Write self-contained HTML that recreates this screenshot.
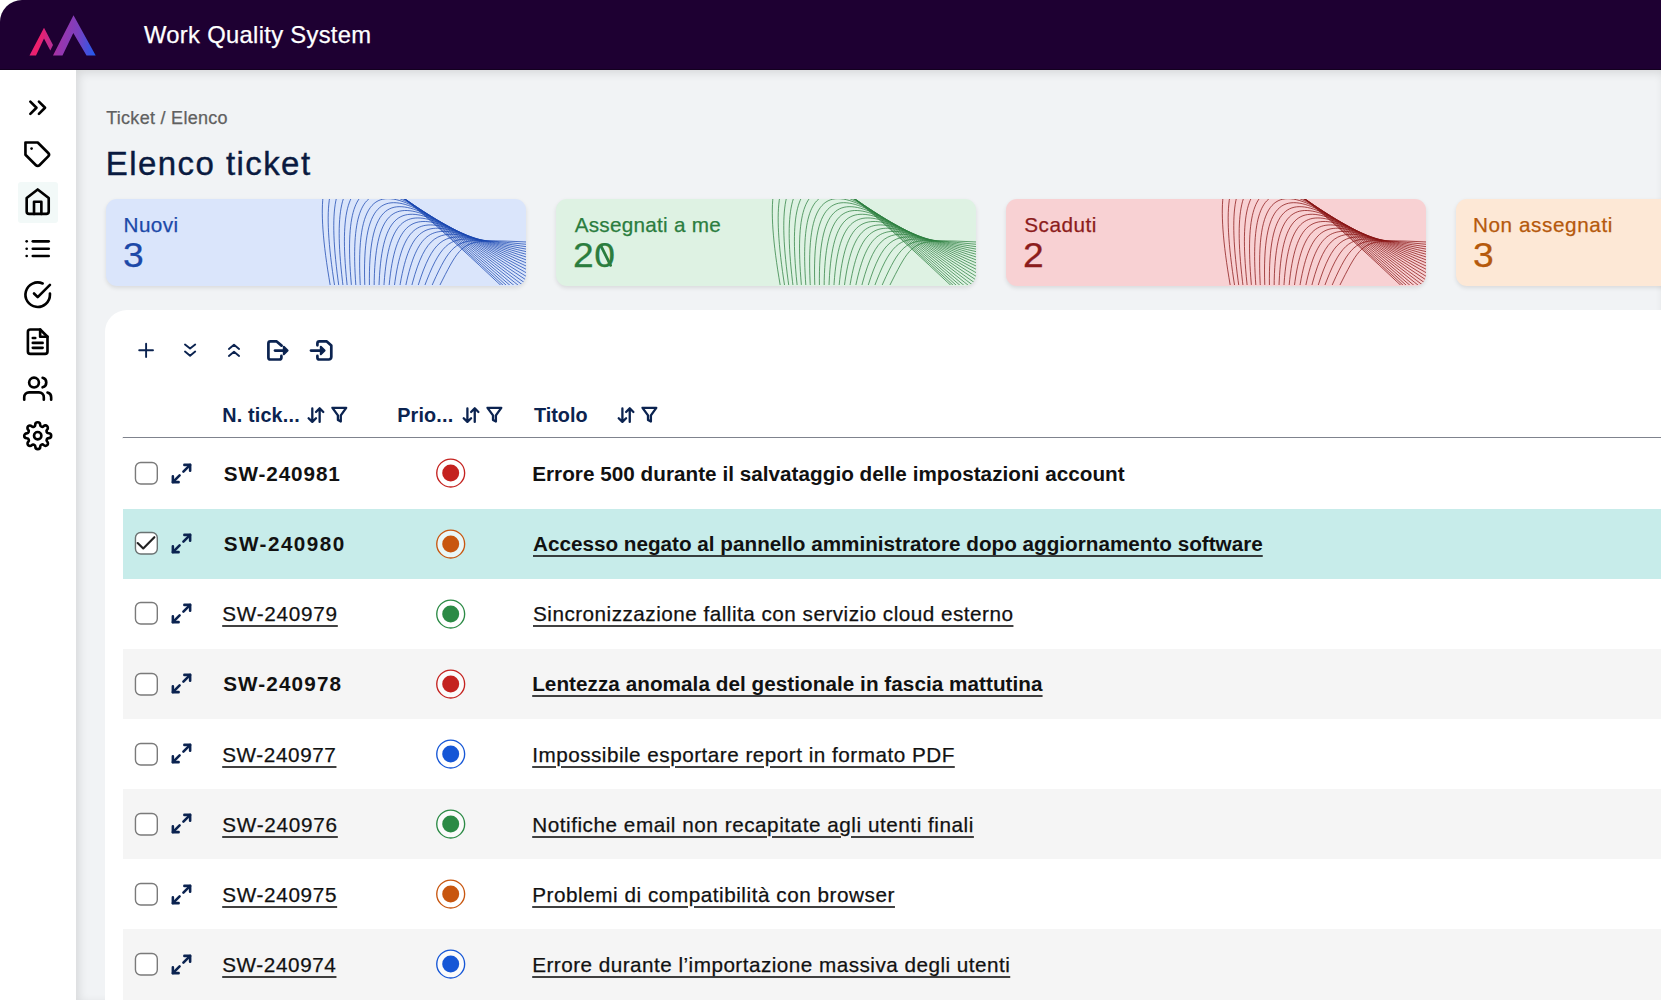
<!DOCTYPE html><html lang="it"><head><meta charset="utf-8"><title>Work Quality System</title><style>
*{box-sizing:border-box;margin:0;padding:0}
html,body{width:1661px;height:1000px;overflow:hidden;background:#fff;font-family:"Liberation Sans",sans-serif;}
.abs{position:absolute}
.ic{position:absolute;overflow:visible}
#hdr{position:absolute;left:0;top:0;width:1661px;height:70px;background:#1e0032;border-top-left-radius:22px;border-bottom:1px solid #13001f;z-index:5}
#side{position:absolute;left:0;top:70px;width:76px;height:930px;background:#fff;z-index:3}
#main{position:absolute;left:76px;top:70px;width:1585px;height:930px;background:#f1f3f5;overflow:hidden;box-shadow:inset 3px 3px 10px rgba(0,0,0,.11)}
.t{position:absolute;white-space:nowrap;line-height:1}
.card{position:absolute;top:199.4px;width:420.3px;height:86.7px;border-radius:11px;overflow:hidden;box-shadow:0 2px 4px rgba(0,0,0,.10)}
.card svg{position:absolute;left:0;top:0;width:420px;height:86px}
#panel{position:absolute;left:105px;top:310px;width:1600px;height:720px;background:#fff;border-top-left-radius:22px}
.row{position:absolute;left:122.75px;width:1560px;height:70.6px}
.u{text-decoration:underline;text-decoration-thickness:2px;text-underline-offset:4.2px;text-decoration-color:rgba(17,17,17,.8)}
.b{font-weight:bold;-webkit-text-stroke:0}
.t{-webkit-text-stroke:.25px}
#ttl{-webkit-text-stroke:.4px}
.b{-webkit-text-stroke:0}
</style></head><body>
<div id="hdr">
<svg class="abs" style="left:0;top:0" width="140" height="70" viewBox="0 0 140 70"><defs><linearGradient id="lg" x1="30" y1="40" x2="96" y2="50" gradientUnits="userSpaceOnUse"><stop offset="0" stop-color="#e0257e"/><stop offset=".12" stop-color="#f01f6a"/><stop offset=".45" stop-color="#9a35ad"/><stop offset=".7" stop-color="#7a40c0"/><stop offset="1" stop-color="#1f5cf0"/></linearGradient></defs><path fill="url(#lg)" d="M29.5 55.6 44 27.8 53 45 50.3 50.5 44 38.5 36 55.6ZM53 55.6 73.5 15.2 95.7 55.6H86.5L73.3 33 62.5 55.6Z"/></svg>
<div class="t " id="appname" style="left:144.00px;top:23.00px;font-size:23.8px;color:#fff;letter-spacing:0.301px;">Work Quality System</div>
</div>
<div id="side"><div class="abs" style="left:17.7px;top:111.6px;width:40.6px;height:41.3px;background:#f2f9f8;border-radius:3px"></div></div>
<div class="abs" style="left:0;top:0;z-index:4">
<svg class="ic" style="left:23.30px;top:93.30px;width:29.40px;height:29.40px;color:#000;" viewBox="0 0 24 24" fill="none" stroke="currentColor" stroke-width="2.15" stroke-linecap="round" stroke-linejoin="round"><polyline points="13 17 18 12 13 7"/><polyline points="6 17 11 12 6 7"/></svg>
<svg class="ic" style="left:23.30px;top:140.05px;width:29.40px;height:29.40px;color:#000;" viewBox="0 0 24 24" fill="none" stroke="currentColor" stroke-width="2.15" stroke-linecap="round" stroke-linejoin="round"><path d="M20.59 13.41l-7.17 7.17a2 2 0 0 1-2.83 0L2 12V2h10l8.59 8.59a2 2 0 0 1 0 2.82z"/><line x1="7" y1="7" x2="7.01" y2="7"/></svg>
<svg class="ic" style="left:23.30px;top:186.80px;width:29.40px;height:29.40px;color:#000;" viewBox="0 0 24 24" fill="none" stroke="currentColor" stroke-width="2.15" stroke-linecap="round" stroke-linejoin="round"><path d="M3 9l9-7 9 7v11a2 2 0 0 1-2 2H5a2 2 0 0 1-2-2z"/><polyline points="9 22 9 12 15 12 15 22"/></svg>
<svg class="ic" style="left:23.30px;top:233.55px;width:29.40px;height:29.40px;color:#000;" viewBox="0 0 24 24" fill="none" stroke="currentColor" stroke-width="2.15" stroke-linecap="round" stroke-linejoin="round"><line x1="8" y1="6" x2="21" y2="6"/><line x1="8" y1="12" x2="21" y2="12"/><line x1="8" y1="18" x2="21" y2="18"/><line x1="3" y1="6" x2="3.01" y2="6"/><line x1="3" y1="12" x2="3.01" y2="12"/><line x1="3" y1="18" x2="3.01" y2="18"/></svg>
<svg class="ic" style="left:23.30px;top:280.30px;width:29.40px;height:29.40px;color:#000;" viewBox="0 0 24 24" fill="none" stroke="currentColor" stroke-width="2.15" stroke-linecap="round" stroke-linejoin="round"><path d="M22 11.08V12a10 10 0 1 1-5.93-9.14"/><polyline points="22 4 12 14.01 9 11.01"/></svg>
<svg class="ic" style="left:23.30px;top:327.05px;width:29.40px;height:29.40px;color:#000;" viewBox="0 0 24 24" fill="none" stroke="currentColor" stroke-width="2.15" stroke-linecap="round" stroke-linejoin="round"><path d="M14 2H6a2 2 0 0 0-2 2v16a2 2 0 0 0 2 2h12a2 2 0 0 0 2-2V8z"/><polyline points="14 2 14 8 20 8"/><line x1="16" y1="13" x2="8" y2="13"/><line x1="16" y1="17" x2="8" y2="17"/><polyline points="10 9 9 9 8 9"/></svg>
<svg class="ic" style="left:23.30px;top:373.80px;width:29.40px;height:29.40px;color:#000;" viewBox="0 0 24 24" fill="none" stroke="currentColor" stroke-width="2.15" stroke-linecap="round" stroke-linejoin="round"><path d="M17 21v-2a4 4 0 0 0-4-4H5a4 4 0 0 0-4 4v2"/><circle cx="9" cy="7" r="4"/><path d="M23 21v-2a4 4 0 0 0-3-3.87"/><path d="M16 3.13a4 4 0 0 1 0 7.75"/></svg>
<svg class="ic" style="left:23.30px;top:420.55px;width:29.40px;height:29.40px;color:#000;" viewBox="0 0 24 24" fill="none" stroke="currentColor" stroke-width="2.15" stroke-linecap="round" stroke-linejoin="round"><circle cx="12" cy="12" r="3"/><path d="M19.4 15a1.65 1.65 0 0 0 .33 1.82l.06.06a2 2 0 0 1 0 2.83 2 2 0 0 1-2.83 0l-.06-.06a1.65 1.65 0 0 0-1.82-.33 1.65 1.65 0 0 0-1 1.51V21a2 2 0 0 1-2 2 2 2 0 0 1-2-2v-.09A1.65 1.65 0 0 0 9 19.4a1.65 1.65 0 0 0-1.82.33l-.06.06a2 2 0 0 1-2.83 0 2 2 0 0 1 0-2.83l.06-.06a1.65 1.65 0 0 0 .33-1.82 1.65 1.65 0 0 0-1.51-1H3a2 2 0 0 1-2-2 2 2 0 0 1 2-2h.09A1.65 1.65 0 0 0 4.6 9a1.65 1.65 0 0 0-.33-1.82l-.06-.06a2 2 0 0 1 0-2.83 2 2 0 0 1 2.83 0l.06.06a1.65 1.65 0 0 0 1.82.33H9a1.65 1.65 0 0 0 1-1.51V3a2 2 0 0 1 2-2 2 2 0 0 1 2 2v.09a1.65 1.65 0 0 0 1 1.51 1.65 1.65 0 0 0 1.82-.33l.06-.06a2 2 0 0 1 2.83 0 2 2 0 0 1 0 2.83l-.06.06a1.65 1.65 0 0 0-.33 1.82V9a1.65 1.65 0 0 0 1.51 1H21a2 2 0 0 1 2 2 2 2 0 0 1-2 2h-.09a1.65 1.65 0 0 0-1.51 1z"/></svg>
</div>
<div id="main"></div>
<div class="abs" style="left:0;top:0;width:1661px;height:1000px;overflow:hidden;z-index:2">
<div class="t " id="bc" style="left:106.20px;top:108.50px;font-size:18px;color:#606060;letter-spacing:0.286px;">Ticket / Elenco</div>
<div class="t " id="ttl" style="left:105.80px;top:147.30px;font-size:33px;color:#0a1a40;letter-spacing:1.432px;">Elenco ticket</div>
<div class="card" style="left:106px;background:#dae5fb"><svg viewBox="0 0 420 86"><path d="M233.0 131.8C176.1 -139.1 268.6 -29.9 450.0 137.9M236.6 131.5C185.0 -131.6 275.5 -22.9 449.4 134.0M240.1 131.3C193.4 -124.5 282.8 -15.6 449.0 129.5M243.6 131.0C201.6 -117.7 289.8 -8.4 448.9 124.7M247.1 130.9C209.6 -111.0 296.5 -1.5 448.9 119.8M250.7 130.7C217.4 -104.4 302.9 5.0 449.1 114.8M254.4 130.6C225.3 -97.7 308.8 11.2 449.4 109.8M258.1 130.5C233.2 -91.1 314.3 16.9 449.8 104.9M261.8 130.3C241.2 -84.4 319.3 22.2 450.4 99.9M265.6 130.2C249.3 -77.5 323.7 27.0 451.1 95.0M269.4 130.1C257.6 -70.5 327.7 31.2 452.0 90.2M273.3 130.0C266.1 -63.3 331.0 35.0 453.0 85.5M277.1 129.8C274.8 -55.8 333.8 38.2 454.1 80.9M281.0 129.6C283.9 -48.2 336.0 40.9 455.4 76.4M284.9 129.4C293.3 -40.2 337.7 43.0 456.8 72.0M288.8 129.1C303.0 -31.9 338.7 44.5 458.3 67.7M292.8 128.8C313.1 -23.3 339.1 45.5 459.9 63.5M296.7 128.4C323.6 -14.4 338.9 45.9 461.7 59.5M300.6 128.0C334.5 -5.1 338.0 45.7 463.6 55.6M304.4 127.5C345.9 4.6 336.5 44.8 465.6 51.9M308.3 127.0C357.8 14.8 334.4 43.4 467.8 48.3M312.2 126.4C370.2 25.4 331.6 41.4 470.1 44.9" fill="none" stroke="#1a47b0" stroke-width=".75"/></svg></div>
<div class="t " id="cl0" style="left:123.50px;top:215.00px;font-size:20.7px;color:#1c49a8;letter-spacing:0.450px;">Nuovi</div>
<div class="t " id="cn0" style="left:123.10px;top:238.20px;font-size:34.8px;color:#1c49a8;letter-spacing:0.000px;transform:scaleX(1.07);transform-origin:0 0">3</div>
<div class="card" style="left:556px;background:#def2e3"><svg viewBox="0 0 420 86"><path d="M233.0 131.8C176.1 -139.1 268.6 -29.9 450.0 137.9M236.6 131.5C185.0 -131.6 275.5 -22.9 449.4 134.0M240.1 131.3C193.4 -124.5 282.8 -15.6 449.0 129.5M243.6 131.0C201.6 -117.7 289.8 -8.4 448.9 124.7M247.1 130.9C209.6 -111.0 296.5 -1.5 448.9 119.8M250.7 130.7C217.4 -104.4 302.9 5.0 449.1 114.8M254.4 130.6C225.3 -97.7 308.8 11.2 449.4 109.8M258.1 130.5C233.2 -91.1 314.3 16.9 449.8 104.9M261.8 130.3C241.2 -84.4 319.3 22.2 450.4 99.9M265.6 130.2C249.3 -77.5 323.7 27.0 451.1 95.0M269.4 130.1C257.6 -70.5 327.7 31.2 452.0 90.2M273.3 130.0C266.1 -63.3 331.0 35.0 453.0 85.5M277.1 129.8C274.8 -55.8 333.8 38.2 454.1 80.9M281.0 129.6C283.9 -48.2 336.0 40.9 455.4 76.4M284.9 129.4C293.3 -40.2 337.7 43.0 456.8 72.0M288.8 129.1C303.0 -31.9 338.7 44.5 458.3 67.7M292.8 128.8C313.1 -23.3 339.1 45.5 459.9 63.5M296.7 128.4C323.6 -14.4 338.9 45.9 461.7 59.5M300.6 128.0C334.5 -5.1 338.0 45.7 463.6 55.6M304.4 127.5C345.9 4.6 336.5 44.8 465.6 51.9M308.3 127.0C357.8 14.8 334.4 43.4 467.8 48.3M312.2 126.4C370.2 25.4 331.6 41.4 470.1 44.9" fill="none" stroke="#2e8040" stroke-width=".75"/></svg></div>
<div class="t " id="cl1" style="left:574.70px;top:215.00px;font-size:20.7px;color:#2b7d3e;letter-spacing:0.261px;">Assegnati a me</div>
<div class="t " id="cn1" style="left:573.30px;top:238.20px;font-size:34.8px;color:#2b7d3e;letter-spacing:0.600px;transform:scaleX(1.07);transform-origin:0 0">20</div>
<div class="card" style="left:1006px;background:#f8d1d3"><svg viewBox="0 0 420 86"><path d="M233.0 131.8C176.1 -139.1 268.6 -29.9 450.0 137.9M236.6 131.5C185.0 -131.6 275.5 -22.9 449.4 134.0M240.1 131.3C193.4 -124.5 282.8 -15.6 449.0 129.5M243.6 131.0C201.6 -117.7 289.8 -8.4 448.9 124.7M247.1 130.9C209.6 -111.0 296.5 -1.5 448.9 119.8M250.7 130.7C217.4 -104.4 302.9 5.0 449.1 114.8M254.4 130.6C225.3 -97.7 308.8 11.2 449.4 109.8M258.1 130.5C233.2 -91.1 314.3 16.9 449.8 104.9M261.8 130.3C241.2 -84.4 319.3 22.2 450.4 99.9M265.6 130.2C249.3 -77.5 323.7 27.0 451.1 95.0M269.4 130.1C257.6 -70.5 327.7 31.2 452.0 90.2M273.3 130.0C266.1 -63.3 331.0 35.0 453.0 85.5M277.1 129.8C274.8 -55.8 333.8 38.2 454.1 80.9M281.0 129.6C283.9 -48.2 336.0 40.9 455.4 76.4M284.9 129.4C293.3 -40.2 337.7 43.0 456.8 72.0M288.8 129.1C303.0 -31.9 338.7 44.5 458.3 67.7M292.8 128.8C313.1 -23.3 339.1 45.5 459.9 63.5M296.7 128.4C323.6 -14.4 338.9 45.9 461.7 59.5M300.6 128.0C334.5 -5.1 338.0 45.7 463.6 55.6M304.4 127.5C345.9 4.6 336.5 44.8 465.6 51.9M308.3 127.0C357.8 14.8 334.4 43.4 467.8 48.3M312.2 126.4C370.2 25.4 331.6 41.4 470.1 44.9" fill="none" stroke="#8a1515" stroke-width=".75"/></svg></div>
<div class="t " id="cl2" style="left:1024.30px;top:215.00px;font-size:20.7px;color:#8c1c1c;letter-spacing:0.500px;">Scaduti</div>
<div class="t " id="cn2" style="left:1023.30px;top:238.20px;font-size:34.8px;color:#8c1c1c;letter-spacing:0.000px;transform:scaleX(1.07);transform-origin:0 0">2</div>
<div class="card" style="left:1456px;background:#fde8d6"><svg viewBox="0 0 420 86"><path d="M233.0 131.8C176.1 -139.1 268.6 -29.9 450.0 137.9M236.6 131.5C185.0 -131.6 275.5 -22.9 449.4 134.0M240.1 131.3C193.4 -124.5 282.8 -15.6 449.0 129.5M243.6 131.0C201.6 -117.7 289.8 -8.4 448.9 124.7M247.1 130.9C209.6 -111.0 296.5 -1.5 448.9 119.8M250.7 130.7C217.4 -104.4 302.9 5.0 449.1 114.8M254.4 130.6C225.3 -97.7 308.8 11.2 449.4 109.8M258.1 130.5C233.2 -91.1 314.3 16.9 449.8 104.9M261.8 130.3C241.2 -84.4 319.3 22.2 450.4 99.9M265.6 130.2C249.3 -77.5 323.7 27.0 451.1 95.0M269.4 130.1C257.6 -70.5 327.7 31.2 452.0 90.2M273.3 130.0C266.1 -63.3 331.0 35.0 453.0 85.5M277.1 129.8C274.8 -55.8 333.8 38.2 454.1 80.9M281.0 129.6C283.9 -48.2 336.0 40.9 455.4 76.4M284.9 129.4C293.3 -40.2 337.7 43.0 456.8 72.0M288.8 129.1C303.0 -31.9 338.7 44.5 458.3 67.7M292.8 128.8C313.1 -23.3 339.1 45.5 459.9 63.5M296.7 128.4C323.6 -14.4 338.9 45.9 461.7 59.5M300.6 128.0C334.5 -5.1 338.0 45.7 463.6 55.6M304.4 127.5C345.9 4.6 336.5 44.8 465.6 51.9M308.3 127.0C357.8 14.8 334.4 43.4 467.8 48.3M312.2 126.4C370.2 25.4 331.6 41.4 470.1 44.9" fill="none" stroke="#b5590c" stroke-width=".75"/></svg></div>
<div class="t " id="cl3" style="left:1472.90px;top:215.00px;font-size:20.7px;color:#b5590c;letter-spacing:0.600px;">Non assegnati</div>
<div class="t " id="cn3" style="left:1473.10px;top:238.20px;font-size:34.8px;color:#b5590c;letter-spacing:0.000px;transform:scaleX(1.07);transform-origin:0 0">3</div>
<svg class="ic" style="left:590px;top:240px;width:30px;height:32px" viewBox="590 240 30 32"><path d="M601.2 246.3 610.6 265.3" stroke="#2b7d3e" stroke-width="2.8" stroke-linecap="round"/></svg>
<div id="panel"></div>
<svg class="ic" style="left:130px;top:332px;width:210px;height:38px;color:#0b2350" viewBox="130 332 210 38" fill="none" stroke="currentColor" stroke-linecap="round" stroke-linejoin="round">
<g stroke-width="1.9"><path d="M139.2 350.3H153M146.1 343.7V357"/><path d="M185 344.6 190.1 348.6 195.2 344.6M185 351.6 190.1 355.8 195.2 351.6"/><path d="M228.9 349 234 344.8 239.1 349M228.9 356 234 351.8 239.1 356"/></g>
<g stroke-width="2.7"><path d="M281.4 355.9V357.5a2 2 0 0 1-2 2H270.4a2 2 0 0 1-2-2V343.4a2 2 0 0 1 2-2H276.7L281.6 345.6"/><path d="M275 350.55H284"/><path d="M283.8 346.8 287.6 350.55 283.8 354.3Z" fill="currentColor" stroke-width="2"/>
<path d="M317.4 345.3V343.4a2 2 0 0 1 2-2H326.8L331.3 345.6V357a2.5 2.5 0 0 1-2.5 2.5H319.4a2 2 0 0 1-2-2V355.9"/><path d="M311 350.55H321"/><path d="M320.8 346.8 324.6 350.55 320.8 354.3Z" fill="currentColor" stroke-width="2"/></g>
</svg>
<svg class="ic" style="left:300px;top:400px;width:380px;height:30px" viewBox="300 400 380 30" fill="none" stroke="#0b2350" stroke-width="2.3" stroke-linecap="round" stroke-linejoin="round"><g transform="translate(0.0 0)"><path d="M312.3 408.4V421.8M308.6 418.2 312.3 421.9 316 418.2M319.65 421.9V408.3M316 412 319.65 408.3 323.3 412"/><path d="M332.4 407.8H346.2L340.8 415.4V421.5L337.9 420V415.4Z"/></g><g transform="translate(155.1 0)"><path d="M312.3 408.4V421.8M308.6 418.2 312.3 421.9 316 418.2M319.65 421.9V408.3M316 412 319.65 408.3 323.3 412"/><path d="M332.4 407.8H346.2L340.8 415.4V421.5L337.9 420V415.4Z"/></g><g transform="translate(310.1 0)"><path d="M312.3 408.4V421.8M308.6 418.2 312.3 421.9 316 418.2M319.65 421.9V408.3M316 412 319.65 408.3 323.3 412"/><path d="M332.4 407.8H346.2L340.8 415.4V421.5L337.9 420V415.4Z"/></g></svg>
<div class="t b" id="th1" style="left:222.20px;top:405.50px;font-size:19.8px;color:#0b2350;letter-spacing:0.178px;">N. tick...</div>
<div class="t b" id="th2" style="left:397.20px;top:405.50px;font-size:19.8px;color:#0b2350;letter-spacing:0.167px;">Prio...</div>
<div class="t b" id="th3" style="left:534.00px;top:405.50px;font-size:19.8px;color:#0b2350;letter-spacing:0.000px;">Titolo</div>
<svg class="ic" style="left:120px;top:434px;width:1560px;height:8px" viewBox="120 434 1560 8"><path d="M122.8 437.75H1680" stroke="#7f838d" stroke-width="1.5"/></svg>
<div class="row" style="top:438.4px;background:#fff"></div>
<svg class="ic" style="left:134px;top:461.20px;width:25px;height:25px" viewBox="-.75 -.75 25 25" fill="none"><rect x=".7" y=".7" width="21.85" height="21.6" rx="5.3" fill="#fff" stroke="#7a7a7a" stroke-width="1.4"/></svg>
<svg class="ic" style="left:169.60px;top:461.70px;width:23.00px;height:23.00px;color:#0b2350;" viewBox="0 0 24 24" fill="none" stroke="currentColor" stroke-width="2.7" stroke-linecap="round" stroke-linejoin="round"><polyline points="15 3 21 3 21 9"/><polyline points="9 21 3 21 3 15"/><line x1="21" x2="14" y1="3" y2="10"/><line x1="3" x2="10" y1="21" y2="14"/></svg>
<div class="t b" id="n0" style="left:223.80px;top:463.95px;font-size:20.7px;color:#111;letter-spacing:0.900px;">SW-240981</div>
<svg class="ic" style="left:434px;top:456.4px;width:34px;height:34px" viewBox="0 0 34 34"><circle cx="16.7" cy="17" r="13.95" fill="rgba(255,255,255,.6)" stroke="#c4221f" stroke-width="1.35"/><circle cx="16.7" cy="17" r="8.5" fill="#c4221f"/></svg>
<div class="t b" id="r0" style="left:532.20px;top:463.95px;font-size:20.7px;color:#111;letter-spacing:0.026px;">Errore 500 durante il salvataggio delle impostazioni account</div>
<div class="row" style="top:508.5px;background:#c7ecea"></div>
<svg class="ic" style="left:134px;top:531.34px;width:25px;height:25px" viewBox="-.75 -.75 25 25" fill="none"><rect x=".7" y=".7" width="21.85" height="21.6" rx="5.3" fill="#fff" stroke="#6a7272" stroke-width="1.4"/><path d="M2.9 11.3 8.5 16.7 19.6 5.4" stroke="#222" stroke-width="2.15" stroke-linecap="round" stroke-linejoin="round"/></svg>
<svg class="ic" style="left:169.60px;top:531.84px;width:23.00px;height:23.00px;color:#0b2350;" viewBox="0 0 24 24" fill="none" stroke="currentColor" stroke-width="2.7" stroke-linecap="round" stroke-linejoin="round"><polyline points="15 3 21 3 21 9"/><polyline points="9 21 3 21 3 15"/><line x1="21" x2="14" y1="3" y2="10"/><line x1="3" x2="10" y1="21" y2="14"/></svg>
<div class="t b" id="n1" style="left:223.80px;top:534.09px;font-size:20.7px;color:#111;letter-spacing:1.450px;">SW-240980</div>
<svg class="ic" style="left:434px;top:526.5px;width:34px;height:34px" viewBox="0 0 34 34"><circle cx="16.7" cy="17" r="13.95" fill="rgba(255,255,255,.6)" stroke="#c8560f" stroke-width="1.35"/><circle cx="16.7" cy="17" r="8.5" fill="#c8560f"/></svg>
<div class="t b u" id="r1" style="left:533.00px;top:534.09px;font-size:20.7px;color:#111;letter-spacing:-0.003px;">Accesso negato al pannello amministratore dopo aggiornamento software</div>
<div class="row" style="top:578.7px;background:#fff"></div>
<svg class="ic" style="left:134px;top:601.48px;width:25px;height:25px" viewBox="-.75 -.75 25 25" fill="none"><rect x=".7" y=".7" width="21.85" height="21.6" rx="5.3" fill="#fff" stroke="#7a7a7a" stroke-width="1.4"/></svg>
<svg class="ic" style="left:169.60px;top:601.98px;width:23.00px;height:23.00px;color:#0b2350;" viewBox="0 0 24 24" fill="none" stroke="currentColor" stroke-width="2.7" stroke-linecap="round" stroke-linejoin="round"><polyline points="15 3 21 3 21 9"/><polyline points="9 21 3 21 3 15"/><line x1="21" x2="14" y1="3" y2="10"/><line x1="3" x2="10" y1="21" y2="14"/></svg>
<div class="t  u" id="n2" style="left:222.20px;top:604.23px;font-size:20.7px;color:#111;letter-spacing:0.750px;">SW-240979</div>
<svg class="ic" style="left:434px;top:596.7px;width:34px;height:34px" viewBox="0 0 34 34"><circle cx="16.7" cy="17" r="13.95" fill="rgba(255,255,255,.6)" stroke="#2b8a45" stroke-width="1.35"/><circle cx="16.7" cy="17" r="8.5" fill="#2b8a45"/></svg>
<div class="t  u" id="r2" style="left:533.00px;top:604.23px;font-size:20.7px;color:#111;letter-spacing:0.492px;">Sincronizzazione fallita con servizio cloud esterno</div>
<div class="row" style="top:648.8px;background:#f5f5f5"></div>
<svg class="ic" style="left:134px;top:671.62px;width:25px;height:25px" viewBox="-.75 -.75 25 25" fill="none"><rect x=".7" y=".7" width="21.85" height="21.6" rx="5.3" fill="#fff" stroke="#7a7a7a" stroke-width="1.4"/></svg>
<svg class="ic" style="left:169.60px;top:672.12px;width:23.00px;height:23.00px;color:#0b2350;" viewBox="0 0 24 24" fill="none" stroke="currentColor" stroke-width="2.7" stroke-linecap="round" stroke-linejoin="round"><polyline points="15 3 21 3 21 9"/><polyline points="9 21 3 21 3 15"/><line x1="21" x2="14" y1="3" y2="10"/><line x1="3" x2="10" y1="21" y2="14"/></svg>
<div class="t b" id="n3" style="left:223.20px;top:674.37px;font-size:20.7px;color:#111;letter-spacing:1.125px;">SW-240978</div>
<svg class="ic" style="left:434px;top:666.8px;width:34px;height:34px" viewBox="0 0 34 34"><circle cx="16.7" cy="17" r="13.95" fill="rgba(255,255,255,.6)" stroke="#c4221f" stroke-width="1.35"/><circle cx="16.7" cy="17" r="8.5" fill="#c4221f"/></svg>
<div class="t b u" id="r3" style="left:532.20px;top:674.37px;font-size:20.7px;color:#111;letter-spacing:0.044px;">Lentezza anomala del gestionale in fascia mattutina</div>
<div class="row" style="top:719.0px;background:#fff"></div>
<svg class="ic" style="left:134px;top:741.76px;width:25px;height:25px" viewBox="-.75 -.75 25 25" fill="none"><rect x=".7" y=".7" width="21.85" height="21.6" rx="5.3" fill="#fff" stroke="#7a7a7a" stroke-width="1.4"/></svg>
<svg class="ic" style="left:169.60px;top:742.26px;width:23.00px;height:23.00px;color:#0b2350;" viewBox="0 0 24 24" fill="none" stroke="currentColor" stroke-width="2.7" stroke-linecap="round" stroke-linejoin="round"><polyline points="15 3 21 3 21 9"/><polyline points="9 21 3 21 3 15"/><line x1="21" x2="14" y1="3" y2="10"/><line x1="3" x2="10" y1="21" y2="14"/></svg>
<div class="t  u" id="n4" style="left:222.20px;top:744.51px;font-size:20.7px;color:#111;letter-spacing:0.600px;">SW-240977</div>
<svg class="ic" style="left:434px;top:737.0px;width:34px;height:34px" viewBox="0 0 34 34"><circle cx="16.7" cy="17" r="13.95" fill="rgba(255,255,255,.6)" stroke="#1556d6" stroke-width="1.35"/><circle cx="16.7" cy="17" r="8.5" fill="#1556d6"/></svg>
<div class="t  u" id="r4" style="left:532.20px;top:744.51px;font-size:20.7px;color:#111;letter-spacing:0.496px;">Impossibile esportare report in formato PDF</div>
<div class="row" style="top:789.1px;background:#f5f5f5"></div>
<svg class="ic" style="left:134px;top:811.90px;width:25px;height:25px" viewBox="-.75 -.75 25 25" fill="none"><rect x=".7" y=".7" width="21.85" height="21.6" rx="5.3" fill="#fff" stroke="#7a7a7a" stroke-width="1.4"/></svg>
<svg class="ic" style="left:169.60px;top:812.40px;width:23.00px;height:23.00px;color:#0b2350;" viewBox="0 0 24 24" fill="none" stroke="currentColor" stroke-width="2.7" stroke-linecap="round" stroke-linejoin="round"><polyline points="15 3 21 3 21 9"/><polyline points="9 21 3 21 3 15"/><line x1="21" x2="14" y1="3" y2="10"/><line x1="3" x2="10" y1="21" y2="14"/></svg>
<div class="t  u" id="n5" style="left:222.20px;top:814.65px;font-size:20.7px;color:#111;letter-spacing:0.750px;">SW-240976</div>
<svg class="ic" style="left:434px;top:807.1px;width:34px;height:34px" viewBox="0 0 34 34"><circle cx="16.7" cy="17" r="13.95" fill="rgba(255,255,255,.6)" stroke="#2b8a45" stroke-width="1.35"/><circle cx="16.7" cy="17" r="8.5" fill="#2b8a45"/></svg>
<div class="t  u" id="r5" style="left:532.20px;top:814.65px;font-size:20.7px;color:#111;letter-spacing:0.542px;">Notifiche email non recapitate agli utenti finali</div>
<div class="row" style="top:859.2px;background:#fff"></div>
<svg class="ic" style="left:134px;top:882.04px;width:25px;height:25px" viewBox="-.75 -.75 25 25" fill="none"><rect x=".7" y=".7" width="21.85" height="21.6" rx="5.3" fill="#fff" stroke="#7a7a7a" stroke-width="1.4"/></svg>
<svg class="ic" style="left:169.60px;top:882.54px;width:23.00px;height:23.00px;color:#0b2350;" viewBox="0 0 24 24" fill="none" stroke="currentColor" stroke-width="2.7" stroke-linecap="round" stroke-linejoin="round"><polyline points="15 3 21 3 21 9"/><polyline points="9 21 3 21 3 15"/><line x1="21" x2="14" y1="3" y2="10"/><line x1="3" x2="10" y1="21" y2="14"/></svg>
<div class="t  u" id="n6" style="left:222.20px;top:884.79px;font-size:20.7px;color:#111;letter-spacing:0.675px;">SW-240975</div>
<svg class="ic" style="left:434px;top:877.2px;width:34px;height:34px" viewBox="0 0 34 34"><circle cx="16.7" cy="17" r="13.95" fill="rgba(255,255,255,.6)" stroke="#c8560f" stroke-width="1.35"/><circle cx="16.7" cy="17" r="8.5" fill="#c8560f"/></svg>
<div class="t  u" id="r6" style="left:532.20px;top:884.79px;font-size:20.7px;color:#111;letter-spacing:0.544px;">Problemi di compatibilità con browser</div>
<div class="row" style="top:929.4px;background:#f5f5f5"></div>
<svg class="ic" style="left:134px;top:952.18px;width:25px;height:25px" viewBox="-.75 -.75 25 25" fill="none"><rect x=".7" y=".7" width="21.85" height="21.6" rx="5.3" fill="#fff" stroke="#7a7a7a" stroke-width="1.4"/></svg>
<svg class="ic" style="left:169.60px;top:952.68px;width:23.00px;height:23.00px;color:#0b2350;" viewBox="0 0 24 24" fill="none" stroke="currentColor" stroke-width="2.7" stroke-linecap="round" stroke-linejoin="round"><polyline points="15 3 21 3 21 9"/><polyline points="9 21 3 21 3 15"/><line x1="21" x2="14" y1="3" y2="10"/><line x1="3" x2="10" y1="21" y2="14"/></svg>
<div class="t  u" id="n7" style="left:222.20px;top:954.93px;font-size:20.7px;color:#111;letter-spacing:0.600px;">SW-240974</div>
<svg class="ic" style="left:434px;top:947.4px;width:34px;height:34px" viewBox="0 0 34 34"><circle cx="16.7" cy="17" r="13.95" fill="rgba(255,255,255,.6)" stroke="#1556d6" stroke-width="1.35"/><circle cx="16.7" cy="17" r="8.5" fill="#1556d6"/></svg>
<div class="t  u" id="r7" style="left:532.20px;top:954.93px;font-size:20.7px;color:#111;letter-spacing:0.477px;">Errore durante l’importazione massiva degli utenti</div>
</div>
</body></html>
